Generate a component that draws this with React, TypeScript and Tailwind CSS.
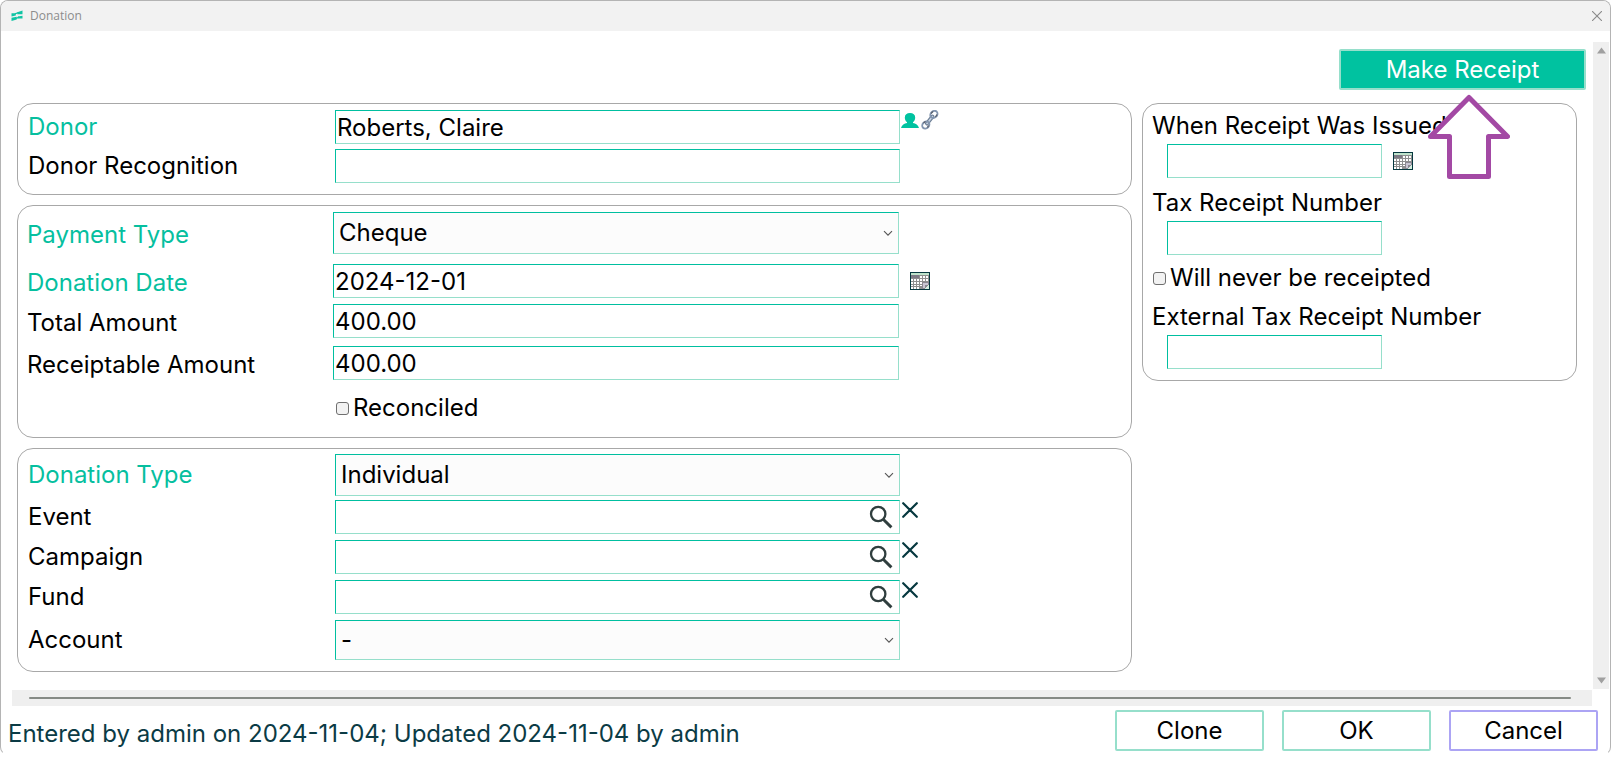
import type { ReactNode } from 'react';

const inputClass =
  'h-[34px] w-full min-w-0 border border-t-[#00bfa0] border-l-[#00bfa0] border-r-[#96dfcb] border-b-[#96dfcb] bg-white px-px text-black outline-none';

interface RowProps {
  id: string;
  label: string;
  link?: boolean;
  className?: string;
  labelClass?: string;
  trailing?: ReactNode;
  children: ReactNode;
}

function Row({ id, label, link = false, className = '', labelClass = 'w-[307px]', trailing, children }: RowProps) {
  return (
    <div className={`flex items-center ${className}`}>
      <label htmlFor={id} className={`shrink-0 ${labelClass} ${link ? 'text-[#06bf9f]' : 'text-black'}`}>
        {label}
      </label>
      <div className="relative min-w-0 flex-1">{children}</div>
      <div className="flex w-[231px] shrink-0 self-stretch">{trailing}</div>
    </div>
  );
}

function Select({ id, value, className }: { id: string; value: string; className: string }) {
  return (
    <>
      <select
        id={id}
        defaultValue={value}
        className={`block w-full appearance-none border border-t-[#00bfa0] border-l-[#00bfa0] border-r-[#96dfcb] border-b-[#96dfcb] bg-[#fcfcfc] pl-[5px] text-black outline-none ${className}`}
      >
        <option>{value}</option>
      </select>
      <svg className="pointer-events-none absolute top-1/2 right-[6px] -mt-1 h-2 w-[10px]" viewBox="0 0 10 8" fill="none" stroke="#555" strokeWidth="1.1">
        <path d="M1 2.2l4 4 4-4" />
      </svg>
    </>
  );
}

function SearchInput({ id }: { id: string }) {
  return (
    <>
      <input id={id} type="text" className={`block pr-9 ${inputClass}`} />
      <button type="button" aria-label="Search" className="absolute top-[5px] right-[7px]">
        <svg className="h-6 w-6" viewBox="0 0 24 24" fill="none" stroke="#2f3e3e">
          <circle cx="9.2" cy="9" r="7.2" strokeWidth="2.3" />
          <path d="M14.2 14.2l8.2 8.2" strokeWidth="2.9" />
        </svg>
      </button>
    </>
  );
}

function ClearButton() {
  return (
    <button type="button" aria-label="Clear" className="mt-[2px] ml-[2px] h-4 w-4">
      <svg viewBox="0 0 16 16" fill="none" stroke="#06383f" strokeWidth="2.2" strokeLinecap="round">
        <path d="M1.2 1.2l13.6 13.6M14.8 1.2L1.2 14.8" />
      </svg>
    </button>
  );
}

function CalendarButton() {
  return (
    <button type="button" aria-label="Pick a date" className="ml-[11px] self-center">
      <svg className="h-[18px] w-5" viewBox="0 0 20 18" shapeRendering="crispEdges">
        <rect width="20" height="18" fill="#06383f" />
        <rect x="1" y="1" width="18" height="16" fill="#8f8f8f" />
        <rect x="1" y="1" width="18" height="2" fill="#bfe3cb" />
        <rect x="1" y="3" width="8" height="3" fill="#7d7a85" />
        <path
          d="M10 4h2v2h-2zM13 4h2v2h-2zM16 4h2v2h-2zM1 7h2v2H1zM4 7h2v2H4zM7 7h2v2H7zM10 7h2v2h-2zM13 7h2v2h-2zM16 7h2v2h-2zM1 10h2v2H1zM4 10h2v2H4zM7 10h2v2H7zM10 10h2v2h-2zM1 13h2v1H1zM4 13h2v1H4zM7 13h2v1H7zM10 13h2v1h-2zM1 15h2v2H1zM4 15h2v2H4zM7 15h2v2H7z"
          fill="#fff"
        />
        <path d="M12 10h7v2l-5 5h-2z" fill="#8b8790" />
        <path d="M13 11h5v2h-3v3h-2z" fill="#c9c5d2" />
        <path d="M19 12v5h-5z" fill="#d5efe0" />
      </svg>
    </button>
  );
}

function PersonIcon() {
  return (
    <svg className="mt-[3px] ml-px h-[15px] w-[18px] shrink-0" viewBox="0 0 18 15" fill="#00c2a0">
      <path d="M9 0c3.200 0 5.200 1.700 5.200 4.400 0 2.100-.9 3.800-2.200 4.700v1c2.700.7 5.200 1.700 6 4.900H0c.8-3.200 3.300-4.200 6-4.900v-1C4.700 8.200 3.800 6.500 3.800 4.400 3.800 1.700 5.800 0 9 0z" />
    </svg>
  );
}

function LinkIcon() {
  return (
    <svg className="ml-[2px] h-5 w-[18px] shrink-0" viewBox="0 0 18 20" fill="none">
      <path d="M6 13.500l5.500-7" stroke="#6d7f96" strokeWidth="4" strokeLinecap="round" />
      <path d="M6 13.500l5.500-7" stroke="#c8d3e2" strokeWidth="1.600" strokeLinecap="round" />
      <ellipse cx="4.800" cy="15" rx="3.900" ry="3.200" transform="rotate(-45 4.800 15)" stroke="#8396b0" strokeWidth="1.900" />
      <ellipse cx="12.900" cy="4.400" rx="3.900" ry="3.200" transform="rotate(-45 12.900 4.400)" stroke="#8396b0" strokeWidth="1.900" />
      <path d="M2.500 13l2-1.500M10 3.500L12 1.500M7.500 15.500l-1 2M16 4.500l-1.500 2.500" stroke="#5a5f6b" strokeWidth="1.200" />
    </svg>
  );
}

function Checkbox({ id, label }: { id: string; label: string }) {
  return (
    <div className="flex h-8 items-center">
      <input
        id={id}
        type="checkbox"
        className="mr-1 h-[13px] w-[13px] appearance-none rounded-[3px] border border-[#6f6f6f] bg-[#f2f2f2]"
      />
      <label htmlFor={id}>{label}</label>
    </div>
  );
}

function Section({ className, children }: { className: string; children: ReactNode }) {
  return <section className={`rounded-2xl border border-[#a8a8a8] ${className}`}>{children}</section>;
}

const paymentLabel = 'w-[306px] pt-1 leading-7';

export default function App() {
  return (
    <div className="min-h-screen bg-white pb-1 font-['Inter',sans-serif] text-[24px] leading-8 text-black">
      <div className="flex min-h-[calc(100vh-4px)] flex-col overflow-hidden rounded-lg border border-[#b4b4b4] border-b-transparent bg-white">
        <header className="flex h-[30px] items-center bg-[#f2f2f2] pr-2 pl-[10px]">
          <svg className="mr-[7px] h-3 w-3" viewBox="0 0 12 12" fill="#10c4a4">
            <path d="M.5 3.200h4.300v2.300L.5 6.600zM6.300 2.200L11.500.6v3.600H6.300zM.5 7.800l5.200-1v2.600L.5 11zM6.800 6.500l4.700-.8v2.800H6.800z" />
            <path d="M4 3.800l3.500-1.300M5 8.500l3-1.300" stroke="#10c4a4" strokeWidth="1.300" />
          </svg>
          <h1 className="flex-1 font-['Open_Sans',sans-serif] text-[12px] leading-4 text-[#8c8c8c]">Donation</h1>
          <button type="button" aria-label="Close">
            <svg className="h-[10px] w-[10px]" viewBox="0 0 10 10" stroke="#8a8a8a" strokeWidth="1.100">
              <path d="M0 0l10 10M10 0L0 10" />
            </svg>
          </button>
        </header>

        <div className="flex flex-1">
          <main className="min-w-0 flex-1 pt-[18px] pr-[7px] pl-4">
            <div className="flex justify-end">
              <button type="button" className="h-[41px] w-[247px] rounded-[2px] border-2 border-[#96dfcb] bg-[#00c2a0] text-white">
                Make Receipt
              </button>
            </div>

            <div className="mt-[13px] flex items-start gap-[10px] pr-[9px]">
              <div className="flex min-w-0 flex-1 flex-col gap-[10px]">
                <Section className="flex flex-col gap-[5px] pt-[6px] pb-[11px] pl-[10px]">
                  <Row id="donor" label="Donor" link trailing={<><PersonIcon /><LinkIcon /></>}>
                    <input id="donor" type="text" defaultValue="Roberts, Claire" className={`block ${inputClass}`} />
                  </Row>
                  <Row id="recognition" label="Donor Recognition">
                    <input id="recognition" type="text" className={`block ${inputClass}`} />
                  </Row>
                </Section>

                <Section className="pt-[6px] pr-px pb-[13px] pl-[9px]">
                  <Row id="paymentType" label="Payment Type" link labelClass={paymentLabel}>
                    <Select id="paymentType" value="Cheque" className="h-[42px]" />
                  </Row>
                  <Row id="donationDate" label="Donation Date" link labelClass={paymentLabel} className="mt-[10px]" trailing={<CalendarButton />}>
                    <input id="donationDate" type="text" defaultValue="2024-12-01" className={`block ${inputClass}`} />
                  </Row>
                  <Row id="total" label="Total Amount" labelClass={paymentLabel} className="mt-[6px]">
                    <input id="total" type="text" defaultValue="400.00" className={`block ${inputClass}`} />
                  </Row>
                  <Row id="receiptable" label="Receiptable Amount" labelClass={paymentLabel} className="mt-2">
                    <input id="receiptable" type="text" defaultValue="400.00" className={`block ${inputClass}`} />
                  </Row>
                  <div className="mt-3 pl-[309px]">
                    <Checkbox id="reconciled" label="Reconciled" />
                  </div>
                </Section>

                <Section className="pt-[5px] pb-[11px] pl-[10px]">
                  <Row id="donationType" label="Donation Type" link>
                    <Select id="donationType" value="Individual" className="h-[42px]" />
                  </Row>
                  <Row id="event" label="Event" className="mt-1" trailing={<ClearButton />}>
                    <SearchInput id="event" />
                  </Row>
                  <Row id="campaign" label="Campaign" className="mt-[6px]" trailing={<ClearButton />}>
                    <SearchInput id="campaign" />
                  </Row>
                  <Row id="fund" label="Fund" className="mt-[6px]" trailing={<ClearButton />}>
                    <SearchInput id="fund" />
                  </Row>
                  <Row id="account" label="Account" className="mt-[6px]">
                    <Select id="account" value="-" className="h-10" />
                  </Row>
                </Section>
              </div>

              <Section className="relative w-[435px] shrink-0 pt-[6px] pb-[11px] pl-[9px]">
                <label htmlFor="issued" className="block">When Receipt Was Issued</label>
                <div className="mt-[2px] flex pl-[15px]">
                  <div className="w-[215px]">
                    <input id="issued" type="text" className={`block ${inputClass}`} />
                  </div>
                  <CalendarButton />
                </div>
                <label htmlFor="taxNumber" className="mt-[9px] block">Tax Receipt Number</label>
                <div className="mt-[2px] w-[230px] pl-[15px]">
                  <input id="taxNumber" type="text" className={`block ${inputClass}`} />
                </div>
                <div className="mt-[7px] pl-px">
                  <Checkbox id="never" label="Will never be receipted" />
                </div>
                <label htmlFor="external" className="mt-[7px] block">External Tax Receipt Number</label>
                <div className="mt-[2px] w-[230px] pl-[15px]">
                  <input id="external" type="text" className={`block ${inputClass}`} />
                </div>

                {/* Callout arrow pointing at Make Receipt */}
                <svg className="pointer-events-none absolute -top-[10px] right-[66px] h-[85px] w-[82px]" viewBox="0 0 82 85" fill="#fff" stroke="#a349a4" strokeWidth="5" strokeLinejoin="round">
                  <path d="M41 3.500L79.500 42.500H60.500V82.500H21.500V42.500H2.500z" />
                </svg>
              </Section>
            </div>
          </main>

          <div className="mt-[11px] mr-px mb-px flex w-4 shrink-0 flex-col items-center justify-between bg-[#efefef] py-[5px]">
            <svg className="h-[7px] w-[9px]" viewBox="0 0 9 7" fill="#a0a0a0">
              <path d="M4.500.5L9 6.500H0z" />
            </svg>
            <svg className="h-[7px] w-[9px]" viewBox="0 0 9 7" fill="#a0a0a0">
              <path d="M4.500 6.500L9 .5H0z" />
            </svg>
          </div>
        </div>

        <div className="mr-[18px] ml-[11px] flex h-4 items-center bg-[#efefef] pr-[21px] pl-[17px]">
          <div className="h-[2px] flex-1 rounded-full bg-[#858a85]"></div>
        </div>

        <footer className="flex items-end gap-[18px] pt-1 pr-3 pb-[3px] pl-[7px]">
          <p className="flex-1 leading-[34px] text-[#0b3b45]">Entered by admin on 2024-11-04; Updated 2024-11-04 by admin</p>
          <button type="button" className="h-[41px] w-[149px] rounded-[2px] border-2 border-[#96dfcb] bg-white">Clone</button>
          <button type="button" className="h-[41px] w-[149px] rounded-[2px] border-2 border-[#96dfcb] bg-white">OK</button>
          <button type="button" className="h-[41px] w-[149px] rounded-[2px] border-2 border-[#aca4f4] bg-white">Cancel</button>
        </footer>
      </div>
    </div>
  );
}
